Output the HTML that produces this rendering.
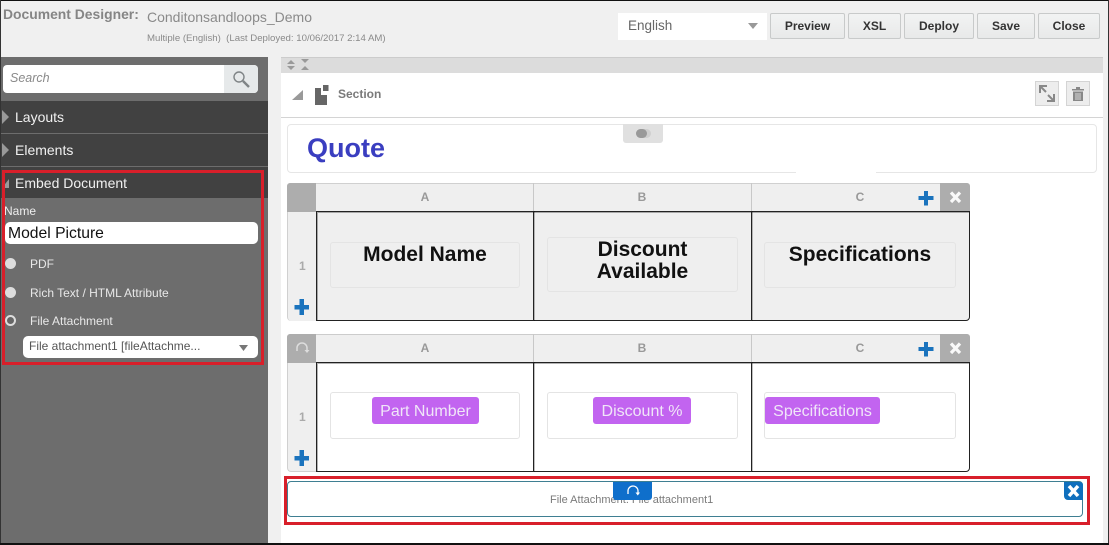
<!DOCTYPE html>
<html><head><meta charset="utf-8"><style>
html,body{margin:0;padding:0;width:1109px;height:545px;overflow:hidden;background:#f0f0f0}
body{position:relative;font-family:"Liberation Sans",sans-serif}
.a,.t{position:absolute}
.t{white-space:nowrap;line-height:1}
.btn{position:absolute;top:13px;height:26px;background:linear-gradient(#f2f3f3,#e8e9e9);border:1px solid #c8caca;border-radius:2px;box-sizing:border-box;text-align:center;font-size:12px;font-weight:bold;line-height:25px;color:#333}
.hd{font-size:12px;font-weight:bold;color:#999;width:40px;text-align:center}
.cell{position:absolute;border:1px solid #e4e4e4;border-radius:3px;box-sizing:border-box}
.pill{position:absolute;background:#c264f0;border-radius:3px;color:#f0e6f8;font-size:16px;text-align:center;height:27px;line-height:29px}
.big{position:absolute;text-align:center;font-weight:bold;font-size:21px;line-height:22px;color:#111}
.grid{position:absolute;left:316px;width:654px;height:110px;border:1px solid #222;border-radius:0 0 4px 0;box-sizing:border-box;box-shadow:inset 1px 1px 0 rgba(0,0,0,.3)}
.v{position:absolute;width:1px;height:110px;background:#222;box-shadow:1px 0 0 rgba(0,0,0,.25)}
</style></head><body>
<div class="a" style="left:0;top:0;width:1109px;height:1px;background:#111"></div>

<div class="t" style="left:3px;top:8px;font-size:13.9px;font-weight:bold;color:#858585">Document Designer:</div>
<div class="t" style="left:147px;top:10px;font-size:14px;color:#8a8a8a">Conditonsandloops_Demo</div>
<div class="t" style="left:147px;top:34px;font-size:9.65px;color:#8a8a8a">Multiple (English)&nbsp; (Last Deployed: 10/06/2017 2:14 AM)</div>

<div class="a" style="left:618px;top:13px;width:149px;height:27px;background:#fff"></div>
<div class="t" style="left:628px;top:19px;font-size:13.5px;color:#666">English</div>
<svg class="a" style="left:747px;top:22px" width="12" height="8"><path d="M1 1H11L6 7Z" fill="#999"/></svg>
<div class="btn" style="left:770px;width:75px">Preview</div>
<div class="btn" style="left:848px;width:53px">XSL</div>
<div class="btn" style="left:904px;width:70px">Deploy</div>
<div class="btn" style="left:977px;width:58px">Save</div>
<div class="btn" style="left:1038px;width:62px">Close</div>

<!-- left panel -->
<div class="a" style="left:1px;top:57px;width:267px;height:488px;background:#6d6d6d"></div>
<div class="a" style="left:3px;top:65px;width:255px;height:28px;background:#fff;border-radius:4px"></div>
<div class="a" style="left:224px;top:65px;width:34px;height:28px;background:#e6e9ea;border-radius:0 4px 4px 0"></div>
<div class="t" style="left:10px;top:72px;font-size:12.5px;font-style:italic;color:#8a8a8a">Search</div>
<svg class="a" style="left:232px;top:70px" width="18" height="18" fill="none" stroke="#7f8486"><circle cx="7" cy="7" r="5" stroke-width="1.4"/><path d="M11 11L17 17" stroke-width="2.4"/></svg>

<div class="a" style="left:1px;top:101px;width:267px;height:32px;background:#414141"></div>
<div class="a" style="left:1px;top:134px;width:267px;height:32px;background:#414141"></div>
<div class="a" style="left:1px;top:167px;width:267px;height:31px;background:#414141"></div>
<svg class="a" style="left:2px;top:110px" width="8" height="14"><path d="M0 0L7 7L0 14Z" fill="#999"/></svg>
<svg class="a" style="left:2px;top:143px" width="8" height="14"><path d="M0 0L7 7L0 14Z" fill="#999"/></svg>
<svg class="a" style="left:2px;top:177px" width="8" height="12"><path d="M7 2V11H0Z" fill="#999"/></svg>
<div class="t" style="left:15px;top:110px;font-size:14px;color:#f0f0f0">Layouts</div>
<div class="t" style="left:15px;top:143px;font-size:14px;color:#f0f0f0">Elements</div>
<div class="t" style="left:15px;top:176px;font-size:14px;color:#f0f0f0">Embed Document</div>

<div class="t" style="left:4px;top:205px;font-size:12px;color:#eee">Name</div>
<div class="a" style="left:5px;top:222px;width:253px;height:22px;background:#fff;border-radius:5px"></div>
<div class="t" style="left:8px;top:226px;font-size:15.7px;color:#111">Model Picture</div>
<div class="a" style="left:5px;top:258px;width:11px;height:11px;border-radius:50%;background:#ddd"></div>
<div class="a" style="left:5px;top:287px;width:11px;height:11px;border-radius:50%;background:#ddd"></div>
<div class="a" style="left:5px;top:315px;width:11px;height:11px;border-radius:50%;background:#666;border:2px solid #ddd;box-sizing:border-box"></div>
<div class="t" style="left:30px;top:258px;font-size:12px;color:#e8e8e8">PDF</div>
<div class="t" style="left:30px;top:287px;font-size:12px;color:#e8e8e8">Rich Text / HTML Attribute</div>
<div class="t" style="left:30px;top:315px;font-size:12px;color:#e8e8e8">File Attachment</div>
<div class="a" style="left:23px;top:336px;width:235px;height:22px;background:#fff;border-radius:5px"></div>
<div class="t" style="left:29px;top:340px;font-size:12px;color:#555">File attachment1 [fileAttachme...</div>
<svg class="a" style="left:238px;top:344px" width="12" height="8"><path d="M1 1H10L5.5 7Z" fill="#777"/></svg>
<div class="a" style="left:2px;top:170px;width:262px;height:195px;border:3px solid #d81f2a;box-sizing:border-box"></div>

<!-- right area -->
<div class="a" style="left:281px;top:57px;width:822px;height:16px;background:#dcdcdc;border-top:1px solid #ccc;box-sizing:border-box"></div>
<div class="a" style="left:281px;top:73px;width:822px;height:470px;background:#fff"></div>
<svg class="a" style="left:286px;top:59px" width="24" height="12" fill="#999"><path d="M1 5L5 1L9 5ZM1 7H9L5 11Z"/><path d="M15 0H23L19 4ZM15 11L19 7L23 11Z"/></svg>
<svg class="a" style="left:292px;top:89px" width="12" height="12"><path d="M11 1V11H0Z" fill="#999"/></svg>
<svg class="a" style="left:314px;top:84px" width="15" height="21" fill="#666"><path d="M1 4H7V11H13V21H1Z"/><rect x="9" y="1" width="5.5" height="6"/></svg>
<div class="t" style="left:338px;top:88px;font-size:12px;font-weight:bold;color:#7a7a7a">Section</div>
<div class="a" style="left:1035px;top:81px;width:24px;height:25px;background:#ededed;border:1px solid #d4d4d4;box-sizing:border-box"></div>
<svg class="a" style="left:1035px;top:81px" width="24" height="25" fill="none" stroke="#888" stroke-width="2"><path d="M5 12V5H12M5 5L11 11M19 13V20H12M19 20L13 14"/></svg>
<div class="a" style="left:1066px;top:81px;width:24px;height:25px;background:#ededed;border:1px solid #d4d4d4;box-sizing:border-box"></div>
<svg class="a" style="left:1071px;top:86px" width="14" height="16"><path d="M1 3H13V4.5H1ZM5 1H9V3H5ZM2 5.5H12V15H2Z" fill="#888"/><path d="M5 7V14M7 7V14M9 7V14" stroke="#ededed" stroke-width=".8"/></svg>
<div class="a" style="left:281px;top:117px;width:822px;height:1px;background:#d4d4d4"></div>

<div class="a" style="left:287px;top:124px;width:810px;height:49px;border:1px solid #e6e6e6;border-radius:4px;box-sizing:border-box"></div>
<div class="a" style="left:796px;top:171px;width:80px;height:4px;background:#fff"></div>
<div class="t" style="left:307px;top:135px;font-size:27px;font-weight:bold;color:#3a3ec0">Quote</div>
<div class="a" style="left:623px;top:124px;width:40px;height:19px;background:#e0e0e0;border-radius:0 0 3px 3px"></div>
<div class="a" style="left:636px;top:129px;width:15px;height:9px;background:#cfcfcf;border-radius:5px"></div>
<div class="a" style="left:636px;top:129px;width:11px;height:9px;background:#999;border-radius:5px"></div>

<!-- table 1 -->
<div class="a" style="left:287px;top:183px;width:683px;height:138px;background:#efefef;border-radius:4px;border:1px solid #d0d0d0;border-width:1px 0 0 1px;box-sizing:border-box"></div>
<div class="a" style="left:287px;top:183px;width:29px;height:29px;background:#adadad;border-radius:3px 0 0 0"></div>
<div class="a" style="left:940px;top:183px;width:30px;height:28px;background:#adadad;border-radius:0 3px 0 0"></div>
<div class="a" style="left:533px;top:183px;width:1px;height:28px;background:#c8c8c8"></div>
<div class="a" style="left:751px;top:183px;width:1px;height:28px;background:#c8c8c8"></div>
<div class="grid" style="top:211px"></div>
<div class="v" style="left:533px;top:211px"></div>
<div class="v" style="left:751px;top:211px"></div>
<div class="t hd" style="left:405px;top:191px">A</div>
<div class="t hd" style="left:622px;top:191px">B</div>
<div class="t hd" style="left:840px;top:191px">C</div>
<div class="t" style="left:299px;top:260px;font-size:12px;font-weight:bold;color:#aaa">1</div>
<div class="cell" style="left:330px;top:242px;width:190px;height:46px"></div>
<div class="cell" style="left:547px;top:237px;width:191px;height:55px"></div>
<div class="cell" style="left:764px;top:242px;width:192px;height:46px"></div>
<div class="big" style="left:330px;top:244px;width:190px">Model Name</div>
<div class="big" style="left:547px;top:239px;width:191px">Discount<br>Available</div>
<div class="big" style="left:764px;top:244px;width:192px">Specifications</div>

<!-- table 2 -->
<div class="a" style="left:287px;top:334px;width:683px;height:29px;background:#efefef;border-radius:4px 4px 0 0;border-top:1px solid #ccc;box-sizing:border-box"></div>
<div class="a" style="left:287px;top:334px;width:29px;height:138px;background:#efefef;border-radius:4px 0 0 4px;border:1px solid #d0d0d0;border-right:0;box-sizing:border-box"></div>
<div class="a" style="left:287px;top:334px;width:29px;height:29px;background:#adadad;border-radius:3px 0 0 0"></div>
<div class="a" style="left:940px;top:334px;width:30px;height:28px;background:#adadad;border-radius:0 3px 0 0"></div>
<div class="a" style="left:533px;top:334px;width:1px;height:28px;background:#c8c8c8"></div>
<div class="a" style="left:751px;top:334px;width:1px;height:28px;background:#c8c8c8"></div>
<div class="grid" style="top:362px"></div>
<div class="v" style="left:533px;top:362px"></div>
<div class="v" style="left:751px;top:362px"></div>
<div class="t hd" style="left:405px;top:342px">A</div>
<div class="t hd" style="left:622px;top:342px">B</div>
<div class="t hd" style="left:840px;top:342px">C</div>
<div class="t" style="left:299px;top:411px;font-size:12px;font-weight:bold;color:#aaa">1</div>
<div class="cell" style="left:330px;top:392px;width:190px;height:47px"></div>
<div class="cell" style="left:547px;top:392px;width:191px;height:47px"></div>
<div class="cell" style="left:764px;top:392px;width:192px;height:47px"></div>
<div class="pill" style="left:372px;top:397px;width:107px">Part Number</div>
<div class="pill" style="left:593px;top:397px;width:98px">Discount %</div>
<div class="pill" style="left:765px;top:397px;width:115px">Specifications</div>

<!-- plus / x / refresh icons -->
<svg class="a" style="left:0;top:0" width="1109" height="545">
<g fill="#1a73bd">
<path d="M299.5 299H304V305H309V309.5H304V315H299.5V309.5H294.5V305H299.5Z"/>
<path d="M299.5 450H304V456H309V460.5H304V466H299.5V460.5H294.5V456H299.5Z"/>
<path d="M924 191H928V196H933.5V200H928V205.5H924V200H918.5V196H924Z"/>
<path d="M924 342H928V347H933.5V351H928V356.5H924V351H918.5V347H924Z"/>
</g>
<g stroke="#fff" stroke-width="3.2" fill="none" opacity=".92">
<path d="M951 192.5L960 202M960 192.5L951 202"/>
<path d="M951 343.5L960 353M960 343.5L951 353"/>
</g>
<path d="M297 352V349A5 5 0 0 1 307 349L307 352" transform="translate(0,-1)" fill="none" stroke="#ddd" stroke-width="1.5"/>
<path d="M304.5 350H309.5L307 353Z" fill="#ddd"/>
</svg>

<!-- file attachment -->
<div class="a" style="left:284px;top:476px;width:806px;height:49px;border:3px solid #d81f2a;box-sizing:border-box"></div>
<div class="a" style="left:287px;top:481px;width:796px;height:36px;border:1px solid #3f7f92;border-radius:4px;box-sizing:border-box"></div>
<div class="t" style="left:550px;top:495px;font-size:11px;color:#7a7a7a">File Attachment: File attachment1</div>
<div class="a" style="left:613px;top:482px;width:39px;height:18px;background:#0f6fcb;border-radius:0 0 3px 3px"></div>
<svg class="a" style="left:613px;top:482px" width="39" height="18" fill="none"><path d="M15 12V9A5 5 0 0 1 25 9V11" stroke="#fff" stroke-width="1.3"/><path d="M22.5 10.5H27L24.8 13.5Z" fill="#fff"/></svg>
<div class="a" style="left:1064px;top:482px;width:19px;height:18px;background:#0f6fbd;border-radius:0 3px 0 4px"></div>
<svg class="a" style="left:1064px;top:482px" width="19" height="18" fill="none"><path d="M5 4L14 14M14 4L5 14" stroke="#fff" stroke-width="3.5"/></svg>

<div class="a" style="left:0;top:0;width:1px;height:545px;background:#333"></div>
<div class="a" style="left:1108px;top:0;width:1px;height:545px;background:#333"></div>
<div class="a" style="left:0;top:543px;width:1109px;height:2px;background:#111"></div>
</body></html>
